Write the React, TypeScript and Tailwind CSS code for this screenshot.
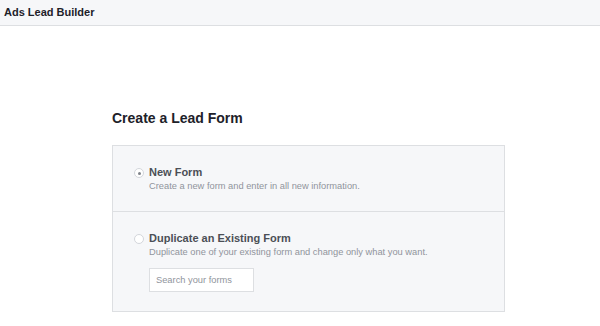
import React, { useState } from 'react';

const RadioDot: React.FC<{ checked: boolean }> = ({ checked }) => (
  <span className="mt-[2px] flex h-[10px] w-[10px] shrink-0 items-center justify-center rounded-full border border-[#d3d6db] bg-white">
    {checked && <span className="h-[3px] w-[3px] rounded-full bg-[#7f838a]"></span>}
  </span>
);

export default function App() {
  const [choice, setChoice] = useState<'new' | 'duplicate'>('new');
  const [query, setQuery] = useState('');

  return (
    <div className="min-h-[326px] bg-white font-['Liberation_Sans',Arial,sans-serif]">
      {/* Top bar */}
      <div className="flex h-[26px] items-center border-b border-[#dddfe2] bg-[#f6f7f9] px-[4px]">
        <span className="text-[11px] font-bold text-[#1d2129]">Ads Lead Builder</span>
      </div>

      <div className="ml-[112px] w-[393px] pt-[84px]">
        <h1 className="text-[14px] leading-[17px] font-bold text-[#1d2129]">Create a Lead Form</h1>

        <div className="mt-[18px] border border-[#dddfe2] bg-[#f6f7f9]">
          {/* New form option */}
          <div
            className="flex cursor-pointer gap-[5px] px-[21px] pt-[20px] pb-[19px]"
            onClick={() => setChoice('new')}
          >
            <RadioDot checked={choice === 'new'} />
            <div>
              <div className="text-[11px] leading-[13px] font-bold text-[#4b4f56]">New Form</div>
              <div className="mt-[1px] text-[9.3px] leading-[12px] text-[#90949c]">
                Create a new form and enter in all new information.
              </div>
            </div>
          </div>

          {/* Duplicate option */}
          <div
            className="flex cursor-pointer gap-[5px] border-t border-[#dddfe2] px-[21px] pt-[20px] pb-[19px]"
            onClick={() => setChoice('duplicate')}
          >
            <RadioDot checked={choice === 'duplicate'} />
            <div>
              <div className="text-[11px] leading-[13px] font-bold text-[#4b4f56]">Duplicate an Existing Form</div>
              <div className="mt-[1px] text-[9.3px] leading-[12px] text-[#90949c]">
                Duplicate one of your existing form and change only what you want.
              </div>
              <input
                type="text"
                value={query}
                onChange={e => setQuery(e.target.value)}
                placeholder="Search your forms"
                className="mt-[10px] h-[24px] w-[105px] border border-[#dddfe2] bg-white px-[6px] text-[9.3px] text-[#1d2129] outline-none placeholder:text-[#90949c]"
              />
            </div>
          </div>
        </div>
      </div>
    </div>
  );
}
